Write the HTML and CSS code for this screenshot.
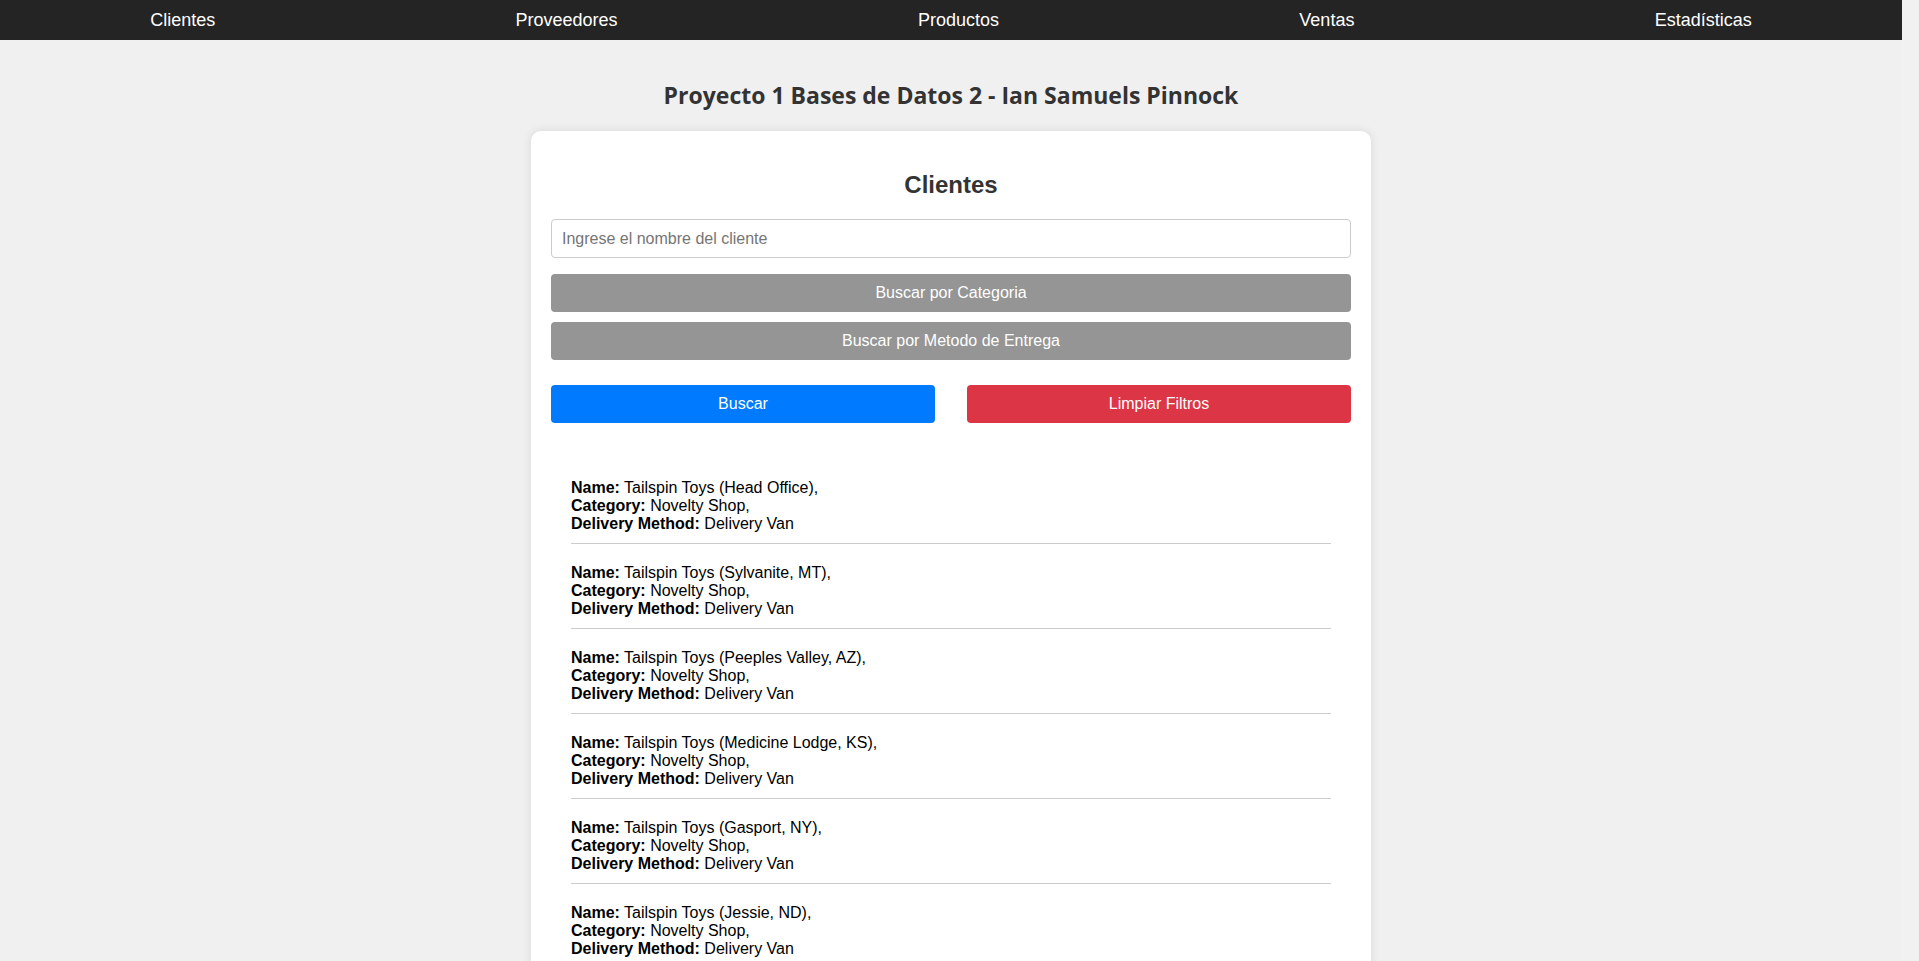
FILE: index.html
```html
<!DOCTYPE html>
<html lang="es">
<head>
<meta charset="utf-8">
<title>Proyecto 1 Bases de Datos 2</title>
<link rel="stylesheet" href="styles.css">
</head>
<body>
<nav class="topnav">
  <a class="nav-link" href="#">Clientes</a>
  <a class="nav-link" href="#">Proveedores</a>
  <a class="nav-link" href="#">Productos</a>
  <a class="nav-link" href="#">Ventas</a>
  <a class="nav-link" href="#">Estadísticas</a>
</nav>
<h1 class="page-title">Proyecto 1 Bases de Datos 2 - Ian Samuels Pinnock</h1>
<main class="card">
  <h2 class="card-title">Clientes</h2>
  <input class="search-input" type="text" placeholder="Ingrese el nombre del cliente">
  <button class="btn btn-gray">Buscar por Categoria</button>
  <button class="btn btn-gray">Buscar por Metodo de Entrega</button>
  <div class="btn-row">
    <button class="btn btn-blue">Buscar</button>
    <button class="btn btn-red">Limpiar Filtros</button>
  </div>
  <ul class="result-list">
    <li class="result"><strong>Name:</strong> Tailspin Toys (Head Office),<br><strong>Category:</strong> Novelty Shop,<br><strong>Delivery Method:</strong> Delivery Van</li>
    <li class="result"><strong>Name:</strong> Tailspin Toys (Sylvanite, MT),<br><strong>Category:</strong> Novelty Shop,<br><strong>Delivery Method:</strong> Delivery Van</li>
    <li class="result"><strong>Name:</strong> Tailspin Toys (Peeples Valley, AZ),<br><strong>Category:</strong> Novelty Shop,<br><strong>Delivery Method:</strong> Delivery Van</li>
    <li class="result"><strong>Name:</strong> Tailspin Toys (Medicine Lodge, KS),<br><strong>Category:</strong> Novelty Shop,<br><strong>Delivery Method:</strong> Delivery Van</li>
    <li class="result"><strong>Name:</strong> Tailspin Toys (Gasport, NY),<br><strong>Category:</strong> Novelty Shop,<br><strong>Delivery Method:</strong> Delivery Van</li>
    <li class="result"><strong>Name:</strong> Tailspin Toys (Jessie, ND),<br><strong>Category:</strong> Novelty Shop,<br><strong>Delivery Method:</strong> Delivery Van</li>
    <li class="result"><strong>Name:</strong> Tailspin Toys (Frankewing, TN),<br><strong>Category:</strong> Novelty Shop,<br><strong>Delivery Method:</strong> Delivery Van</li>
    <li class="result"><strong>Name:</strong> Tailspin Toys (Bow Mar, CO),<br><strong>Category:</strong> Novelty Shop,<br><strong>Delivery Method:</strong> Delivery Van</li>
    <li class="result"><strong>Name:</strong> Tailspin Toys (Netcong, NJ),<br><strong>Category:</strong> Novelty Shop,<br><strong>Delivery Method:</strong> Delivery Van</li>
    <li class="result"><strong>Name:</strong> Tailspin Toys (Wimbledon, ND),<br><strong>Category:</strong> Novelty Shop,<br><strong>Delivery Method:</strong> Delivery Van</li>
    <li class="result"><strong>Name:</strong> Tailspin Toys (Devault, PA),<br><strong>Category:</strong> Novelty Shop,<br><strong>Delivery Method:</strong> Delivery Van</li>
    <li class="result"><strong>Name:</strong> Tailspin Toys (Biscay, MN),<br><strong>Category:</strong> Novelty Shop,<br><strong>Delivery Method:</strong> Delivery Van</li>
    <li class="result"><strong>Name:</strong> Tailspin Toys (Jemison, AL),<br><strong>Category:</strong> Novelty Shop,<br><strong>Delivery Method:</strong> Delivery Van</li>
    <li class="result"><strong>Name:</strong> Tailspin Toys (Lakemore, OH),<br><strong>Category:</strong> Novelty Shop,<br><strong>Delivery Method:</strong> Delivery Van</li>
    <li class="result"><strong>Name:</strong> Tailspin Toys (Eulaton, AL),<br><strong>Category:</strong> Novelty Shop,<br><strong>Delivery Method:</strong> Delivery Van</li>
    <li class="result"><strong>Name:</strong> Tailspin Toys (Cherry Grove Beach, SC),<br><strong>Category:</strong> Novelty Shop,<br><strong>Delivery Method:</strong> Delivery Van</li>
  </ul>
</main>
</body>
</html>
```

FILE: styles.css
```css
html, body {
  margin: 0;
  padding: 0;
}

html {
  background: #f1f1f1;
}

body {
  margin-right: 17px;
  background: #f0f0f0;
  font-family: "Liberation Sans", Arial, sans-serif;
  color: #000;
}

.topnav {
  display: flex;
  justify-content: space-around;
  align-items: center;
  height: 40px;
  background: #242424;
}

.nav-link {
  color: #fff;
  text-decoration: none;
  font-size: 18px;
}

.page-title {
  margin: 0;
  padding: 39px 0 20px;
  text-align: center;
  font-family: "Open Sans", "Noto Sans", sans-serif;
  font-weight: 700;
  font-size: 23px;
  line-height: 32px;
  color: #333;
}

.card {
  box-sizing: border-box;
  width: 840px;
  margin: 0 auto;
  padding: 20px 20px 40px;
  background: #fff;
  border-radius: 10px;
  box-shadow: 0 0 10px rgba(0, 0, 0, 0.1);
  display: flex;
  flex-direction: column;
}

.card-title {
  margin: 20px 0 20px;
  text-align: center;
  font-size: 24px;
  line-height: 28px;
  font-weight: 700;
  color: #333;
}

.search-input {
  box-sizing: border-box;
  height: 39px;
  width: 100%;
  margin: 0 0 16px;
  padding: 0 10px;
  border: 1px solid #ccc;
  border-radius: 4px;
  font-family: "Liberation Sans", Arial, sans-serif;
  font-size: 16px;
  color: #000;
  background: #fff;
}

.search-input::placeholder {
  color: #757575;
}

.btn {
  box-sizing: border-box;
  height: 38px;
  border: none;
  border-radius: 4px;
  color: #fff;
  font-family: "Liberation Sans", Arial, sans-serif;
  font-size: 16px;
  cursor: pointer;
}

.btn-gray {
  width: 100%;
  margin-bottom: 10px;
  background: #949594;
}

.btn-row {
  display: flex;
  gap: 32px;
  margin-top: 15px;
}

.btn-row .btn {
  flex: 1;
}

.btn-blue {
  background: #007bff;
}

.btn-red {
  background: #dc3545;
}

.result-list {
  list-style: none;
  margin: 46px 0 0;
  padding: 0 20px;
}

.result {
  padding: 10px 0;
  margin-bottom: 10px;
  border-bottom: 1px solid #ccc;
  font-size: 16px;
  line-height: normal;
}
```
